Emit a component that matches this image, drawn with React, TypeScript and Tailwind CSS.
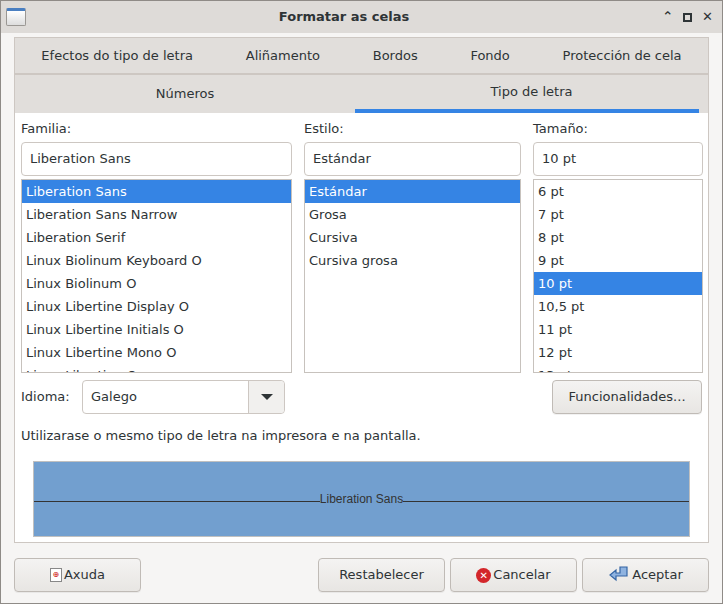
import React from "react";

const F = { fontFamily: '"DejaVu Sans", sans-serif' };

function List({ items, sel, w }: { items: string[]; sel: number; w: string }) {
  return (
    <div className={`${w} h-[194px] bg-white border border-[#c7c2bd] overflow-hidden`}>
      {items.map((t, i) => (
        <div key={i} className={`h-[23px] px-[4px] flex items-center text-[13px] whitespace-nowrap ${i === sel ? "bg-[#3584e4] text-white" : "text-[#2e3436]"}`}>{t}</div>
      ))}
    </div>
  );
}

function Btn({ children, w }: { children: React.ReactNode; w: string }) {
  return (
    <div className={`${w} h-[34px] rounded-[4px] border border-[#c0bbb6] bg-gradient-to-b from-[#f4f3f2] to-[#e8e6e3] flex items-center justify-center text-[13px] text-[#2e3436] gap-[2px] shadow-[0_1px_0_rgba(0,0,0,0.05)]`}>{children}</div>
  );
}

export default function App() {
  return (
    <div style={F} className="w-[723px] h-[604px] bg-[#f6f5f4] border border-[#8f8b87] flex flex-col overflow-hidden text-[#2e3436]">
      <div className="h-[32px] bg-[#dedbd8] flex items-center px-[5px] shrink-0">
        <div className="w-[20px] h-[18px] border border-[#9a9793] rounded-[2px] bg-gradient-to-b from-white to-[#ddd] border-t-[3px] border-t-[#4a7fc1]" />
        <div className="flex-1 text-center text-[13px] font-bold">Formatar as celas</div>
        <div className="flex items-center gap-[10px] pr-[4px] text-[13px] font-bold">
          <span>⌃</span>
          <span className="w-[9px] h-[9px] border-2 border-[#2e3436]" />
          <span>✕</span>
        </div>
      </div>
      <div className="flex-1 px-[13px] pt-[4px] flex flex-col">
        <div className="border border-[#cdc7c2] flex flex-col h-[506px]">
          <div className="h-[37px] bg-[#e1dedb] flex items-center justify-around text-[13px] border-b-2 border-[#cdc7c2]">
            <span>Efectos do tipo de letra</span>
            <span>Aliñamento</span>
            <span>Bordos</span>
            <span>Fondo</span>
            <span>Protección de cela</span>
          </div>
          <div className="h-[38px] bg-[#e1dedb] flex text-[13px]">
            <div className="w-[340px] flex items-center justify-center">Números</div>
            <div className="flex-1 flex flex-col"><div className="flex-1 flex items-center justify-center">Tipo de letra</div><div className="h-[4px] bg-[#3584e4] mr-[9px]" /></div>
          </div>
          <div className="flex-1 bg-white px-[6px] pt-[5px] flex flex-col">
            <div className="flex gap-[12px]">
              {[
                { l: "Familia:", v: "Liberation Sans", w: "w-[271px]", sel: 0, items: ["Liberation Sans", "Liberation Sans Narrow", "Liberation Serif", "Linux Biolinum Keyboard O", "Linux Biolinum O", "Linux Libertine Display O", "Linux Libertine Initials O", "Linux Libertine Mono O", "Linux Libertine O"] },
                { l: "Estilo:", v: "Estándar", w: "w-[217px]", sel: 0, items: ["Estándar", "Grosa", "Cursiva", "Cursiva grosa"] },
                { l: "Tamaño:", v: "10 pt", w: "w-[170px]", sel: 4, items: ["6 pt", "7 pt", "8 pt", "9 pt", "10 pt", "10,5 pt", "11 pt", "12 pt", "13 pt"] },
              ].map((c, i) => (
                <div key={i} className={`${c.w} flex flex-col`}>
                  <div className="text-[13px] h-[22px] flex items-center">{c.l}</div>
                  <div className="h-[34px] mt-[2px] mb-[3px] rounded-[4px] border border-[#cdc7c2] flex items-center px-[8px] text-[13px]">{c.v}</div>
                  <List items={c.items} sel={c.sel} w={c.w} />
                </div>
              ))}
            </div>
            <div className="flex items-center mt-[7px] h-[34px]">
              <span className="text-[13px] w-[61px]">Idioma:</span>
              <div className="w-[203px] h-[34px] rounded-[4px] border border-[#cdc7c2] flex">
                <div className="flex-1 flex items-center px-[8px] text-[13px]">Galego</div>
                <div className="w-[36px] border-l border-[#cdc7c2] bg-[#f1f0ee] flex items-center justify-center rounded-r-[4px]">
                  <div className="w-0 h-0 border-l-[6px] border-r-[6px] border-t-[6px] border-l-transparent border-r-transparent border-t-[#2e3436]" />
                </div>
              </div>
              <div className="flex-1" />
              <Btn w="w-[150px]">Funcionalidades...</Btn>
            </div>
            <div className="text-[13px] mt-[12px]">Utilizarase o mesmo tipo de letra na impresora e na pantalla.</div>
            <div className="mx-[12px] mt-[15px] h-[76px] bg-[#729fcf] border border-[#c0c0c0] flex items-center">
              <div className="flex-1 h-px bg-[#333] mt-[6px]" />
              <span className="text-[12px] text-[#333]" style={{ fontFamily: '"Liberation Sans", sans-serif' }}>Liberation Sans</span>
              <div className="flex-1 h-px bg-[#333] mt-[6px]" />
            </div>
          </div>
        </div>
        <div className="flex mt-[15px] gap-[5px]">
          <Btn w="w-[127px]"><span className="w-[12px] h-[14px] border border-[#888] bg-white text-[8px] text-[#c00] flex items-center justify-center">⊕</span>Axuda</Btn>
          <div className="flex-1" />
          <Btn w="w-[127px]">Restabelecer</Btn>
          <Btn w="w-[127px]"><span className="w-[15px] h-[15px] rounded-full bg-[#d3262a] text-white text-[10px] font-bold flex items-center justify-center">✕</span>Cancelar</Btn>
          <Btn w="w-[127px]">
            <svg width="22" height="18" viewBox="0 0 22 18"><path d="M12 1h7v9H8v4L2 9l6-5v3h4z" fill="#8fb3e0" stroke="#3465a4" strokeWidth="1.2" /></svg>
            Aceptar
          </Btn>
        </div>
      </div>
    </div>
  );
}
